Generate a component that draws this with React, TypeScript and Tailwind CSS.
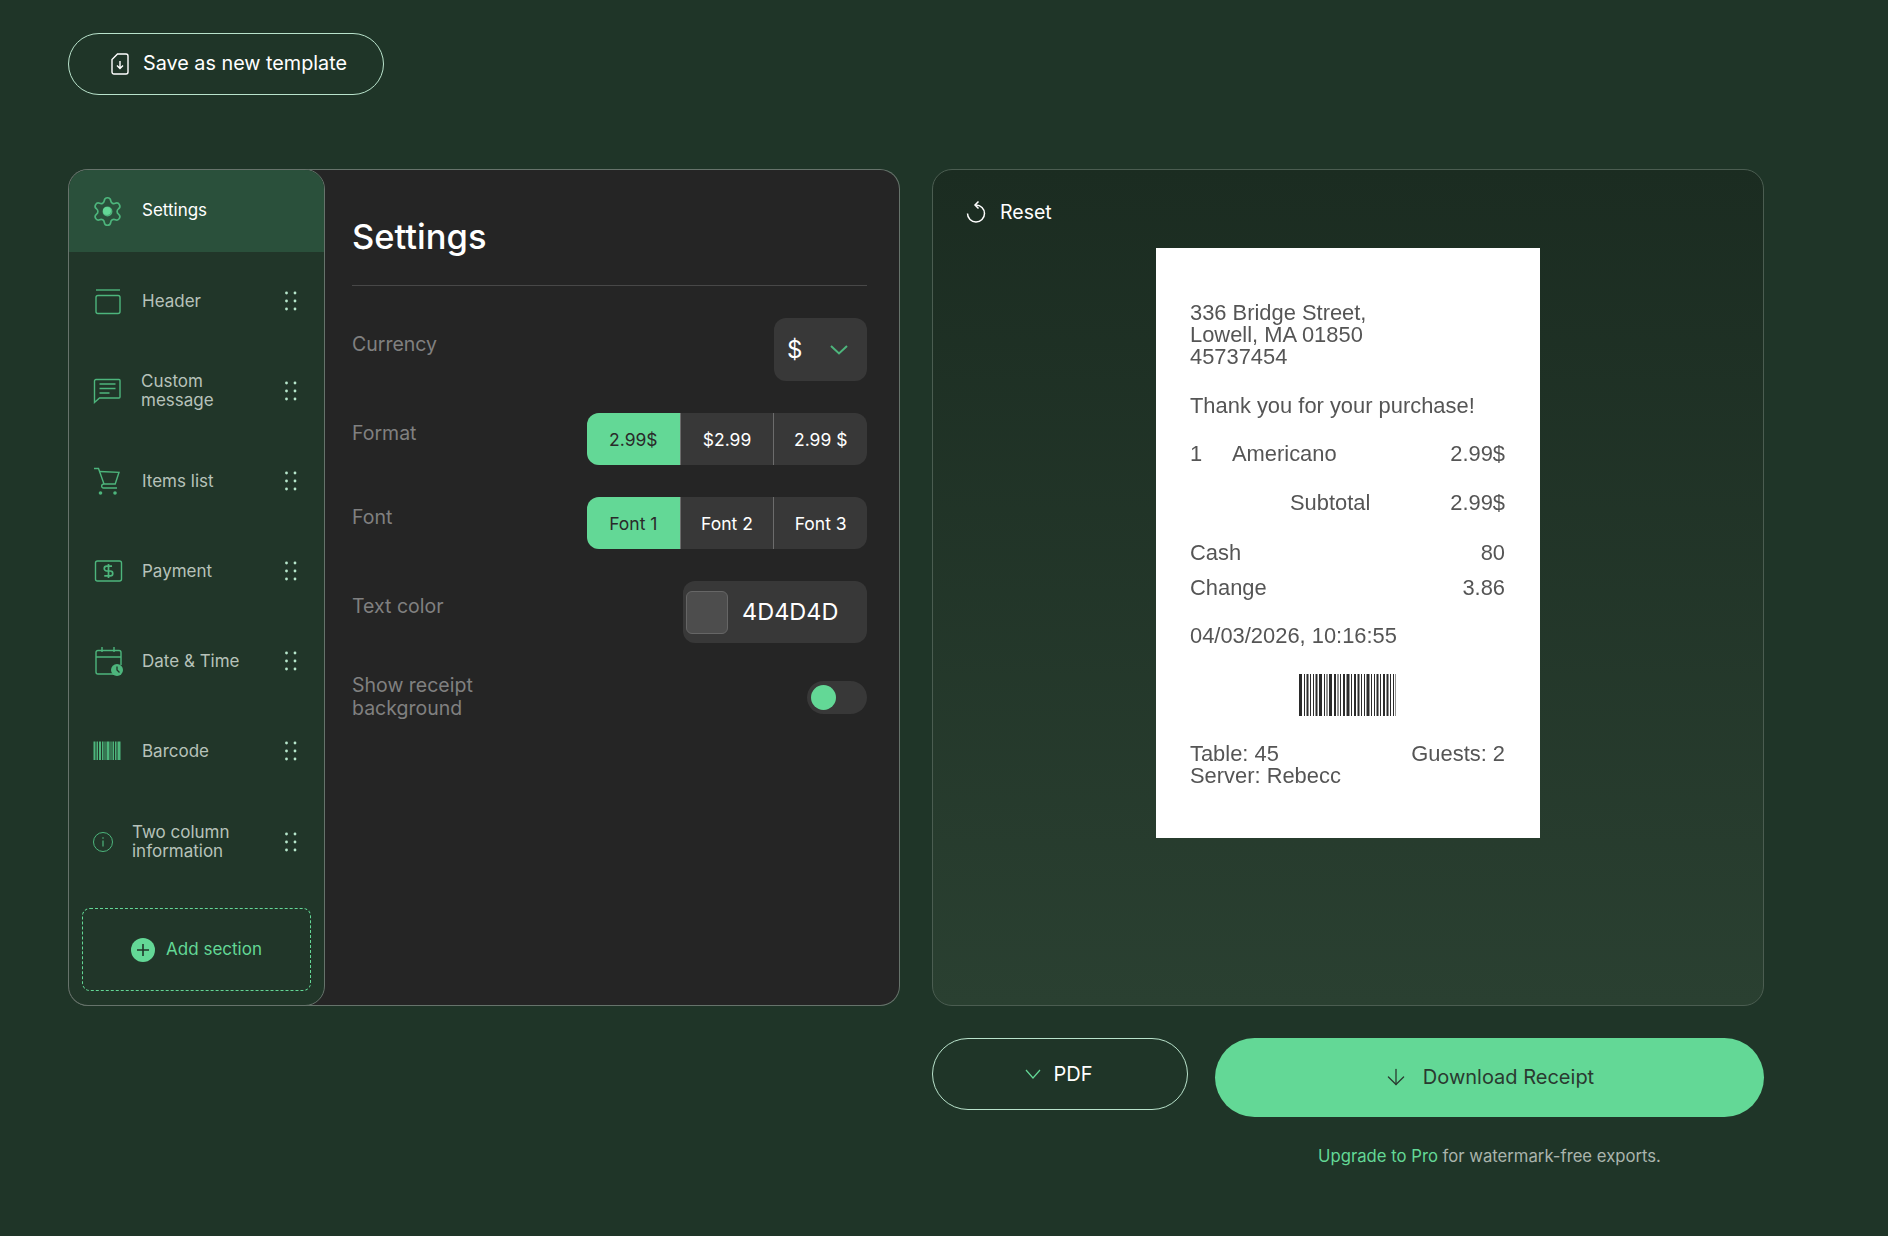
import { ArrowDown, Settings as SettingsIcon } from 'lucide-react'
import type { ReactNode } from 'react'

const ICON = '#4db57c'

function GearIcon() {
    return (
        <div className="relative w-[28px] h-[28px] flex items-center justify-center">
            <SettingsIcon size={33} strokeWidth={1.2} color={ICON} className="shrink-0" />
            <span className="absolute w-[8px] h-[8px] rounded-full bg-[#63d896]" />
        </div>
    )
}

function HeaderIcon() {
    return (
        <svg width="28" height="28" viewBox="0 0 28 28" fill="none" stroke={ICON} strokeWidth="1.4">
            <path d="M3 3h24" />
            <rect x="3" y="8.5" width="24" height="18" rx="2" />
        </svg>
    )
}

function MessageIcon() {
    return (
        <svg width="28" height="28" viewBox="0 0 28 28" fill="none" stroke={ICON} strokeWidth="1.4">
            <path d="M3 2.5h23a1 1 0 0 1 1 1V20a1 1 0 0 1-1 1H6.5l-5 4.5V4a1.5 1.5 0 0 1 1.5-1.5Z" />
            <path d="M6.5 7h16M6.5 11.5h16M6.5 16h10" />
        </svg>
    )
}

function CartIcon() {
    return (
        <svg width="28" height="30" viewBox="0 0 28 30" fill="none" stroke={ICON} strokeWidth="1.4">
            <path d="M1 2.5h4.5L11 18" />
            <path d="M6.5 5.5l19.5.8-3.8 11.7H11c-3 0-3 4-.5 4H24" />
            <circle cx="7.5" cy="27" r="1.8" fill={ICON} stroke="none" />
            <circle cx="22" cy="27" r="1.8" fill={ICON} stroke="none" />
        </svg>
    )
}

function PaymentIcon() {
    return (
        <svg width="30" height="28" viewBox="0 0 30 28" fill="none" stroke={ICON} strokeWidth="1.4">
            <rect x="2.5" y="4" width="26" height="20" rx="2" />
            <svg x="7" y="5.5" width="17" height="17" viewBox="0 0 24 24" strokeWidth="2.4">
                <path d="M12 2v20" />
                <path d="M17 5H9.5a3.5 3.5 0 0 0 0 7h5a3.5 3.5 0 0 1 0 7H6" />
            </svg>
        </svg>
    )
}

function DateIcon() {
    return (
        <svg width="32" height="30" viewBox="0 0 32 30" fill="none" stroke={ICON} strokeWidth="1.4">
            <path d="M20 28H5a2 2 0 0 1-2-2V6.5a2 2 0 0 1 2-2h21a2 2 0 0 1 2 2V19" />
            <path d="M3 11h25M9 1v5M21 1v5" />
            <circle cx="24" cy="24" r="6" fill={ICON} stroke="none" />
            <path d="M24 20.5V24l2.5 2.5" stroke="#213629" strokeWidth="1.3" />
        </svg>
    )
}

function BarcodeIcon() {
    const bars = [[0.5, 2], [3.5, 1.5], [6, 2], [9, 1.5], [11.5, 1], [13.5, 3], [17.5, 1], [19.5, 1.5], [22, 1.5], [24.5, 3]]
    return (
        <svg width="29" height="20" viewBox="0 0 29 20" fill={ICON}>
            {bars.map(([x, w]) => (
                <rect key={x} x={x} y="0.5" width={w} height="18.5" />
            ))}
        </svg>
    )
}

function InfoIcon() {
    return (
        <svg width="20" height="22" viewBox="0 0 20 22" fill="none" stroke={ICON} strokeWidth="1">
            <circle cx="10" cy="11" r="9.5" />
            <path d="M10 9.5v6" strokeWidth="1.2" />
            <circle cx="10" cy="7" r="0.8" fill={ICON} stroke="none" />
        </svg>
    )
}

function DragDots() {
    return (
        <svg width="12" height="20" viewBox="0 0 12 20" fill="#b6e6cb" className="shrink-0">
            {[2, 10, 18].map((y) => (
                <g key={y}>
                    <circle cx="1.5" cy={y} r="1.4" />
                    <circle cx="10" cy={y} r="1.4" />
                </g>
            ))}
        </svg>
    )
}

const sections: { label: ReactNode; icon: ReactNode; iconBox: string; rowHeight: string }[] = [
    { label: 'Header', icon: <HeaderIcon />, iconBox: 'w-[49px]', rowHeight: 'h-[88px]' },
    { label: <>Custom<br />message</>, icon: <MessageIcon />, iconBox: 'w-[48px]', rowHeight: 'h-[91px]' },
    { label: 'Items list', icon: <CartIcon />, iconBox: 'w-[49px]', rowHeight: 'h-[90px]' },
    { label: 'Payment', icon: <PaymentIcon />, iconBox: 'w-[49px]', rowHeight: 'h-[90px]' },
    { label: 'Date & Time', icon: <DateIcon />, iconBox: 'w-[49px]', rowHeight: 'h-[90px]' },
    { label: 'Barcode', icon: <BarcodeIcon />, iconBox: 'w-[49px]', rowHeight: 'h-[90px]' },
    { label: <>Two column<br />information</>, icon: <InfoIcon />, iconBox: 'w-[39px]', rowHeight: 'h-[91px]' },
]

function Sidebar() {
    return (
        <aside className="w-[257px] h-[837px] shrink-0 flex flex-col rounded-[20px] overflow-hidden border border-[#66736b] bg-[#213629]">
            <div className="h-[82px] shrink-0 flex items-center pl-[24px] bg-[#2a503b]">
                <div className="w-[49px] flex"><GearIcon /></div>
                <span className="text-[17px] text-white">Settings</span>
            </div>
            <div className="mt-[5px] flex flex-col">
                {sections.map((s, i) => (
                    <div key={i} className={`${s.rowHeight} flex items-center justify-between pl-[24px] pr-[27px]`}>
                        <div className="flex items-center">
                            <div className={`${s.iconBox} flex items-center`}>{s.icon}</div>
                            <span className="text-[17px] leading-[19px] text-[#b7c2ba]">{s.label}</span>
                        </div>
                        <DragDots />
                    </div>
                ))}
            </div>
            <div className="mt-[21px] ml-[13px] w-[229px] h-[83px] shrink-0 flex items-center justify-center gap-[11px] rounded-lg border border-dashed border-[#63d896]">
                <span className="w-[24px] h-[24px] rounded-full bg-[#63d896] flex items-center justify-center">
                    <svg width="14" height="14" viewBox="0 0 14 14" stroke="#1f3528" strokeWidth="1.6"><path d="M7 1v12M1 7h12" /></svg>
                </span>
                <span className="text-[17px] text-[#63d896]">Add section</span>
            </div>
        </aside>
    )
}

function Segments({ options }: { options: string[] }) {
    return (
        <div className="flex w-[280px] h-[52px] rounded-xl overflow-hidden bg-[#383838] text-[17.5px]">
            {options.map((o, i) => (
                <div
                    key={o}
                    className={`flex-1 flex items-center justify-center pt-[2px] border-r border-[#6c6c6c] last:border-r-0 ${i === 0 ? 'bg-[#63d896] text-[#2a2a2a]' : 'text-white'}`}
                >
                    {o}
                </div>
            ))}
        </div>
    )
}

function SettingsPanel() {
    const label = 'text-[19.5px] leading-[24px] text-[#808080]'
    return (
        <div className="flex-1 pt-[47px] pl-[27px] pr-[32px]">
            <h1 className="text-[34.5px] leading-[40px] font-medium text-white">Settings</h1>
            <div className="mt-[28px] h-px bg-[#484848]" />

            <div className="mt-[32px] flex justify-between items-start">
                <span className={`${label} mt-[14px]`}>Currency</span>
                <div className="w-[93px] h-[63px] rounded-xl bg-[#383838] flex items-center justify-between pl-[13px] pr-[19px]">
                    <span className="text-[24px] text-white">$</span>
                    <svg width="18" height="10" viewBox="0 0 18 10" fill="none" stroke="#4db57c" strokeWidth="2">
                        <path d="M1 1l8 7.5 8-7.5" />
                    </svg>
                </div>
            </div>

            <div className="mt-[32px] flex justify-between items-start">
                <span className={`${label} mt-[8px]`}>Format</span>
                <Segments options={['2.99$', '$2.99', '2.99 $']} />
            </div>

            <div className="mt-[32px] flex justify-between items-start">
                <span className={`${label} mt-[8px]`}>Font</span>
                <Segments options={['Font 1', 'Font 2', 'Font 3']} />
            </div>

            <div className="mt-[32px] flex justify-between items-start">
                <span className={`${label} mt-[13px]`}>Text color</span>
                <div className="w-[184px] h-[62px] rounded-xl bg-[#383838] flex items-center pl-[3px]">
                    <span className="w-[42px] h-[43px] rounded-md bg-[#4d4d4d] border border-[#666666]" />
                    <span className="ml-[14px] text-[23.5px] text-white">4D4D4D</span>
                </div>
            </div>

            <div className="mt-[31px] flex justify-between items-start">
                <span className="text-[19.5px] leading-[23px] text-[#808080]">Show receipt<br />background</span>
                <div className="mt-[7px] w-[60px] h-[33px] rounded-full bg-[#383838] flex items-center pl-[4px]">
                    <span className="w-[25px] h-[25px] rounded-full bg-[#63d896]" />
                </div>
            </div>
        </div>
    )
}

function Barcode() {
    const bars = [3, 1, 2, 1, 1, 2, 3, 1, 1, 3, 2, 1, 1, 2, 3, 1, 2, 2, 1, 1, 3, 1, 1, 2, 1, 2, 2, 1, 1, 1, 2, 1]
    let x = 0
    return (
        <svg width="97" height="42" viewBox="0 0 97 42" fill="#2b2b2b" className="mx-auto mt-[27px]">
            {bars.map((w, i) => {
                const at = x
                x += w + (i % 3 === 0 ? 2 : 1.5)
                return <rect key={i} x={at} y="0" width={w} height="42" />
            })}
        </svg>
    )
}

function Receipt() {
    return (
        <div className="mx-auto mt-[26px] w-[384px] h-[590px] bg-white pt-[54px] pl-[34px] pr-[35px] font-['Liberation_Sans',sans-serif] text-[21.9px] leading-[22px] text-[#555555] blur-[0.3px]">
            <p>336 Bridge Street,<br />Lowell, MA 01850<br />45737454</p>
            <p className="mt-[27px]">Thank you for your purchase!</p>
            <div className="mt-[26px] flex">
                <span className="w-[42px]">1</span>
                <span className="flex-1">Americano</span>
                <span>2.99$</span>
            </div>
            <div className="mt-[27px] flex">
                <span className="flex-1 pl-[100px]">Subtotal</span>
                <span>2.99$</span>
            </div>
            <div className="mt-[28px] flex justify-between"><span>Cash</span><span>80</span></div>
            <div className="mt-[13px] flex justify-between"><span>Change</span><span>3.86</span></div>
            <p className="mt-[26px]">04/03/2026, 10:16:55</p>
            <Barcode />
            <div className="mt-[27px] flex justify-between"><span>Table: 45</span><span>Guests: 2</span></div>
            <p>Server: Rebecc</p>
        </div>
    )
}

export default function App() {
    return (
        <div className="min-h-[1236px] bg-[#1f3528] pt-[33px] pl-[68px] font-['Inter',sans-serif] text-white">
            <button className="w-[316px] h-[62px] flex items-center pl-[42px] gap-[14px] pb-[1px] rounded-full border border-[#b9e3cc] text-[19.8px]">
                <svg width="18" height="22" viewBox="0 0 18 22" fill="none" stroke="white" strokeWidth="1.4">
                    <path d="M6.5 1H15a2 2 0 0 1 2 2v16a2 2 0 0 1-2 2H3a2 2 0 0 1-2-2V6.5Z" />
                    <path d="M9 8v7M6 12.5l3 3 3-3" />
                </svg>
                Save as new template
            </button>

            <div className="mt-[74px] flex gap-[32px] items-start">
                <div className="w-[832px] h-[837px] flex rounded-[20px] bg-[#252525] border-y border-r border-[#66736b]">
                    <div className="-my-px"><Sidebar /></div>
                    <SettingsPanel />
                </div>

                <div className="w-[832px] flex flex-col">
                    <div className="h-[837px] rounded-[20px] border border-[#4b5d51] bg-gradient-to-b from-[#1b2c21] to-[#2a4031] pt-[32px]">
                        <div className="flex items-center h-[20px] pl-[31px] gap-[12px] text-[19.5px]">
                            <svg width="24" height="24" viewBox="0 0 24 24" fill="none" stroke="white" strokeWidth="1.5">
                                <path d="M12 5a8.5 8.5 0 1 1-8.5 8.5" />
                                <path d="M14.5 1.5 11 5l3.5 3.5" />
                            </svg>
                            <span className="pt-[2px]">Reset</span>
                        </div>
                        <Receipt />
                    </div>

                    <div className="mt-[32px] flex gap-[27px] items-start">
                        <button className="w-[256px] h-[72px] flex items-center justify-center gap-[12px] pr-[2px] rounded-full border border-[#b9e3cc] text-[20px]">
                            <svg width="16" height="10" viewBox="0 0 16 10" fill="none" stroke="#63d896" strokeWidth="1.2">
                                <path d="M1 1l7 8 7-8" />
                            </svg>
                            PDF
                        </button>
                        <div className="flex-1 flex flex-col items-center">
                            <button className="w-full h-[79px] flex items-center justify-center gap-[14px] pb-[2px] pr-[2px] rounded-full bg-[#63d896] text-[20px] text-[#2a3a30]">
                                <ArrowDown size={26} strokeWidth={1.2} />
                                Download Receipt
                            </button>
                            <p className="mt-[29px] text-[16.7px] leading-[20px] text-[#aab4ad]">
                                <span className="text-[#63d896]">Upgrade to Pro</span> for watermark-free exports.
                            </p>
                        </div>
                    </div>
                </div>
            </div>
        </div>
    )
}
